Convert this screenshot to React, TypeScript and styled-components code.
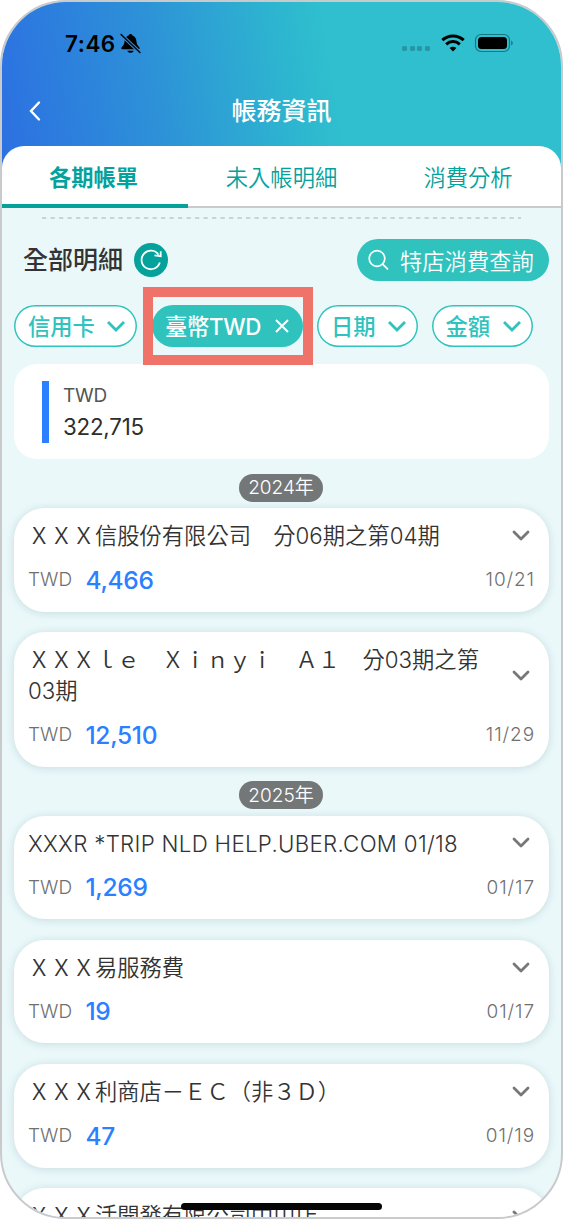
import React from "react";
import styled, { createGlobalStyle, css } from "styled-components";

const latin = `Inter, "Noto Sans CJK TC", sans-serif`;

const Global = createGlobalStyle`
  * { box-sizing: border-box; }
  body { margin: 0; background: #fff; font-family: ${latin}; color: #333; }
  button { font: inherit; border: 0; background: none; padding: 0; margin: 0; color: inherit; }
`;

const Phone = styled.main`
  position: relative;
  width: 563px;
  height: 1219px;
  overflow: hidden;
  border: 2px solid #c9cacc;
  border-radius: 66px;
  background: #eaf8fa;
`;

const Header = styled.header`
  height: 165px;
  background: linear-gradient(81deg, #2c70e2 0%, #2d90d8 27%, #2db4d0 50%, #2fbfce 59%, #2fbfce 100%);
`;

const StatusBar = styled.div`
  display: flex;
  justify-content: space-between;
  align-items: center;
  height: 82px;
  padding: 0 47.5px 0 63px;
  color: #000;
`;

const Clock = styled.div`
  display: flex;
  align-items: center;
  gap: 4px;
  font-size: 22.5px;
  font-weight: 600;
  letter-spacing: 0.5px;
`;

const Signals = styled.div`
  display: flex;
  align-items: center;
`;

const Dots = styled.div`
  display: flex;
  gap: 2.5px;
  margin: 11px 11px 0 0;
  i { width: 5px; height: 5px; border-radius: 1.5px; background: #2796a6; }
`;

const NavBar = styled.div`
  display: grid;
  grid-template-columns: 60px 1fr 60px;
  align-items: center;
  height: 54px;
  color: #fff;
`;

const BackButton = styled.button`
  display: flex;
  padding-left: 26px;
`;

const Title = styled.h1`
  margin: 0;
  text-align: center;
  font-size: 25px;
  font-weight: 500;
  line-height: 36px;
`;

const Tabs = styled.nav`
  display: grid;
  grid-template-columns: 186px 1fr 186px;
  height: 62px;
  margin-top: -21px;
  background: #fff;
  border-radius: 22px 22px 0 0;
  box-shadow: inset 0 -2px 0 #c9cacc;
`;

const Tab = styled.button<{ $active?: boolean }>`
  height: 62px;
  padding-top: 1px;
  padding-right: ${(p) => (p.$active ? 3 : 0)}px;
  font-size: 22.3px;
  font-weight: ${(p) => (p.$active ? 700 : 350)};
  color: #04a29b;
  border-bottom: 4px solid ${(p) => (p.$active ? "#04a29b" : "transparent")};
`;

const Perforation = styled.svg`
  display: block;
  margin: 8.5px 0 0 40px;
`;

const HeadingRow = styled.div`
  display: flex;
  align-items: center;
  height: 42px;
  margin-top: 20.5px;
  padding: 0 12px 0 21px;
`;

const Heading = styled.h2`
  margin: 0 11px 0 0;
  font-size: 25px;
  font-weight: 500;
  line-height: 36px;
`;

const RefreshButton = styled.button`
  display: grid;
  place-items: center;
  width: 34px;
  height: 34px;
  border-radius: 50%;
  background: #04a29b;
`;

const SearchButton = styled.button`
  display: flex;
  align-items: center;
  gap: 11px;
  width: 192px;
  height: 42px;
  margin-left: auto;
  padding: 0 0 1px 11px;
  border-radius: 21px;
  background: #30c3be;
  color: #fff;
  font-size: 22.3px;
  font-weight: 350;
  white-space: nowrap;
`;

const Filters = styled.div`
  display: flex;
  height: 42px;
  margin: 24px 0 17px;
  padding-left: 12px;
`;

const Chip = styled.button<{ $width: number; $selected?: boolean }>`
  display: flex;
  align-items: center;
  justify-content: space-between;
  width: ${(p) => p.$width}px;
  height: 42px;
  margin-right: 14px;
  padding: 0 11px 2px 14px;
  border-radius: 21px;
  font-size: 22.3px;
  font-weight: 500;
  white-space: nowrap;
  svg { position: relative; top: 1px; }
  ${(p) =>
    p.$selected
      ? css`
          position: relative;
          margin-left: 1px;
          background: #30c3be;
          color: #fff;
          padding: 0 13px 2px 13px;
          letter-spacing: -0.3px;
        `
      : css`
          background: #fff;
          color: #30c3be;
          box-shadow: inset 0 0 0 1.5px #30c3be;
        `}
`;

const Highlight = styled.span`
  position: absolute;
  left: -9px;
  top: -18px;
  width: 170px;
  height: 78px;
  border: 10px solid #ef7369;
`;

const Summary = styled.section`
  display: flex;
  height: 95px;
  margin: 0 12px;
  padding: 17px 28px;
  border-radius: 23px;
  background: #fff;
`;

const SummaryBar = styled.div`
  width: 7px;
  height: 62px;
  margin-right: 14px;
  background: #2a80ff;
`;

const SummaryLabel = styled.div`
  font-size: 19px;
  line-height: 30px;
  color: #555;
  letter-spacing: -0.2px;
`;

const SummaryValue = styled.div`
  font-size: 22.3px;
  line-height: 32px;
  color: #2d2d2d;
  letter-spacing: -0.2px;
`;

const Year = styled.div<{ $top: number }>`
  display: flex;
  align-items: center;
  justify-content: center;
  width: 84px;
  height: 28px;
  margin: ${(p) => p.$top}px 0 6.5px 237px;
  padding-top: 1px;
  border-radius: 14px;
  background: #737778;
  color: #fff;
  font-size: 19px;
  font-weight: 350;
  line-height: 28px;
`;

const Card = styled.article`
  margin: 0 12px 20.8px;
  padding: 12.5px 14px 13px;
  border-radius: 31px;
  background: #fff;
  box-shadow: 0 1px 9px rgba(60, 110, 115, 0.2);
`;

const CardTop = styled.div`
  display: flex;
  align-items: center;
  justify-content: space-between;
`;

const Merchant = styled.div<{ $tracking: number }>`
  width: 462px;
  margin-top: -0.5px;
  font-size: 22.3px;
  font-weight: 350;
  line-height: 31px;
  letter-spacing: ${(p) => p.$tracking}px;
`;

const ExpandIcon = styled.svg`
  margin-right: 4px;
`;

const CardBottom = styled.div`
  display: flex;
  align-items: center;
  height: 38px;
  margin-top: 9.5px;
  font-size: 19px;
  color: #707070;
`;

const Currency = styled.span`
  width: 57.5px;
  font-weight: 300;
`;

const Amount = styled.span`
  font-size: 24.5px;
  font-weight: 500;
  letter-spacing: -0.3px;
  color: #2a80ff;
`;

const DateText = styled.span`
  margin-left: auto;
  font-weight: 300;
  letter-spacing: 0.9px;
`;

const HomeIndicator = styled.div`
  position: absolute;
  left: 179px;
  top: 1201px;
  width: 201px;
  height: 7px;
  border-radius: 4px;
  background: #050505;
`;

const Chevron = () => (
  <svg width="20" height="14" viewBox="0 0 20 14" fill="none" stroke="#30c3be" strokeWidth="2.800">
    <path d="M2 3 10 11 18 3" />
  </svg>
);

type Entry = { name: string; amount: string; date: string; tracking?: number };

const Item = ({ name, amount, date, tracking = 0 }: Entry) => (
  <Card>
    <CardTop>
      <Merchant $tracking={tracking}>{name}</Merchant>
      <ExpandIcon width="20" height="14" viewBox="0 0 20 14" fill="none" stroke="#777" strokeWidth="2.800" strokeLinecap="round" strokeLinejoin="round">
        <path d="M3 3 10 10 17 3" />
      </ExpandIcon>
    </CardTop>
    <CardBottom>
      <Currency>TWD</Currency>
      <Amount>{amount}</Amount>
      <DateText>{date}</DateText>
    </CardBottom>
  </Card>
);

const entries2024: Entry[] = [
  { name: "ＸＸＸ信股份有限公司　分06期之第04期", amount: "4,466", date: "10/21" },
  { name: "ＸＸＸｌｅ　Ｘｉｎｙｉ　Ａ１　分03期之第03期", amount: "12,510", date: "11/29" },
];

const entries2025: Entry[] = [
  { name: "XXXR *TRIP NLD HELP.UBER.COM 01/18", amount: "1,269", date: "01/17", tracking: 0.3 },
  { name: "ＸＸＸ易服務費", amount: "19", date: "01/17" },
  { name: "ＸＸＸ利商店－ＥＣ（非３Ｄ）", amount: "47", date: "01/19" },
  { name: "ＸＸＸ活開發有限公司中山店", amount: "120", date: "01/20" },
];

export default function App() {
  return (
    <>
      <Global />
      <Phone>
        <Header>
          <StatusBar>
            <Clock>
              7:46
              <svg width="21" height="21" viewBox="0 0 20 20">
                <path d="M1.600 13.600c1.600-1.600 2.500-2.500 2.700-5.400C4.500 5 6 3 8.400 2.100 8.800.6 11.200.6 11.600 2.100 14 3 15.500 5 15.700 8.200c.2 2.900 1.100 3.800 2.700 5.400.7.800.4 1.900-.7 1.900H2.300c-1.100 0-1.400-1.100-.7-1.900ZM7 16.800h6c-.8 2.700-5.200 2.700-6 0Z" />
                <path d="m1 1.500 18 17" stroke="#2d8bd9" strokeWidth="3.200" />
                <path d="m1 1.500 18 17" stroke="#000" strokeWidth="1.300" strokeLinecap="round" />
              </svg>
            </Clock>
            <Signals>
              <Dots><i /><i /><i /><i /></Dots>
              <svg width="24" height="18" viewBox="0 0 24 18" fill="none" stroke="#000" strokeWidth="3">
                <path d="M1.300 6.200C7.300.6 16.700.6 22.700 6.200" />
                <path d="M5.200 10.300c3.900-3.600 9.700-3.600 13.600 0" />
                <path d="M12 17.400 8.600 13.900c1.900-1.700 4.900-1.700 6.800 0Z" fill="#000" stroke="none" />
              </svg>
              <svg width="40" height="20" viewBox="0 0 40 20" style={{ marginLeft: 9 }}>
                <rect x="1.500" y="1.500" width="34" height="17" rx="5.500" fill="none" stroke="#1a7782" strokeWidth="1.200" />
                <rect x="4" y="4" width="29" height="12" rx="3.500" />
                <path d="M37.200 7.500c2 .8 2 4.200 0 5Z" fill="#1a7782" />
              </svg>
            </Signals>
          </StatusBar>
          <NavBar>
            <BackButton aria-label="返回">
              <svg width="14" height="22" viewBox="0 0 14 22" fill="none" stroke="#fff" strokeWidth="2.400" strokeLinecap="round">
                <path d="M11 2.500 3 11 11 19.500" />
              </svg>
            </BackButton>
            <Title>帳務資訊</Title>
          </NavBar>
        </Header>
        <Tabs>
          <Tab $active>各期帳單</Tab>
          <Tab>未入帳明細</Tab>
          <Tab>消費分析</Tab>
        </Tabs>
        <Perforation width="479" height="2" viewBox="0 0 479 2">
          <path d="M0 1H479" stroke="#c2c6c7" strokeWidth="1.300" strokeDasharray="4.300 4.200" />
        </Perforation>
        <HeadingRow>
          <Heading>全部明細</Heading>
          <RefreshButton aria-label="重新整理">
            <svg width="24" height="24" viewBox="0 0 24 24" fill="none" stroke="#fff" strokeWidth="1.800">
              <path d="M20.800 14.500A9.300 9.300 0 1 1 19.600 6.700" />
              <path d="M21.700 3.300V8.300L15.500 7.300" />
            </svg>
          </RefreshButton>
          <SearchButton>
            <svg width="21" height="21" viewBox="0 0 21 21" fill="none" stroke="#fff" strokeWidth="1.700" strokeLinecap="round">
              <circle cx="9" cy="9.500" r="7.800" />
              <path d="m14.600 15.200 4.900 4.600" />
            </svg>
            特店消費查詢
          </SearchButton>
        </HeadingRow>
        <Filters>
          <Chip $width={123}>信用卡<Chevron /></Chip>
          <Chip $width={151} $selected>
            臺幣TWD
            <svg width="16" height="16" viewBox="0 0 16 16" stroke="#fff" strokeWidth="2">
              <path d="m2 2 12 12M14 2 2 14" />
            </svg>
            <Highlight />
          </Chip>
          <Chip $width={100.5}>日期<Chevron /></Chip>
          <Chip $width={101}>金額<Chevron /></Chip>
        </Filters>
        <Summary>
          <SummaryBar />
          <div>
            <SummaryLabel>TWD</SummaryLabel>
            <SummaryValue>322,715</SummaryValue>
          </div>
        </Summary>
        <Year $top={14.5}>2024年</Year>
        {entries2024.map((e) => <Item key={e.name} {...e} />)}
        <Year $top={-6.5}>2025年</Year>
        {entries2025.map((e) => <Item key={e.name} {...e} />)}
        <HomeIndicator />
      </Phone>
    </>
  );
}
